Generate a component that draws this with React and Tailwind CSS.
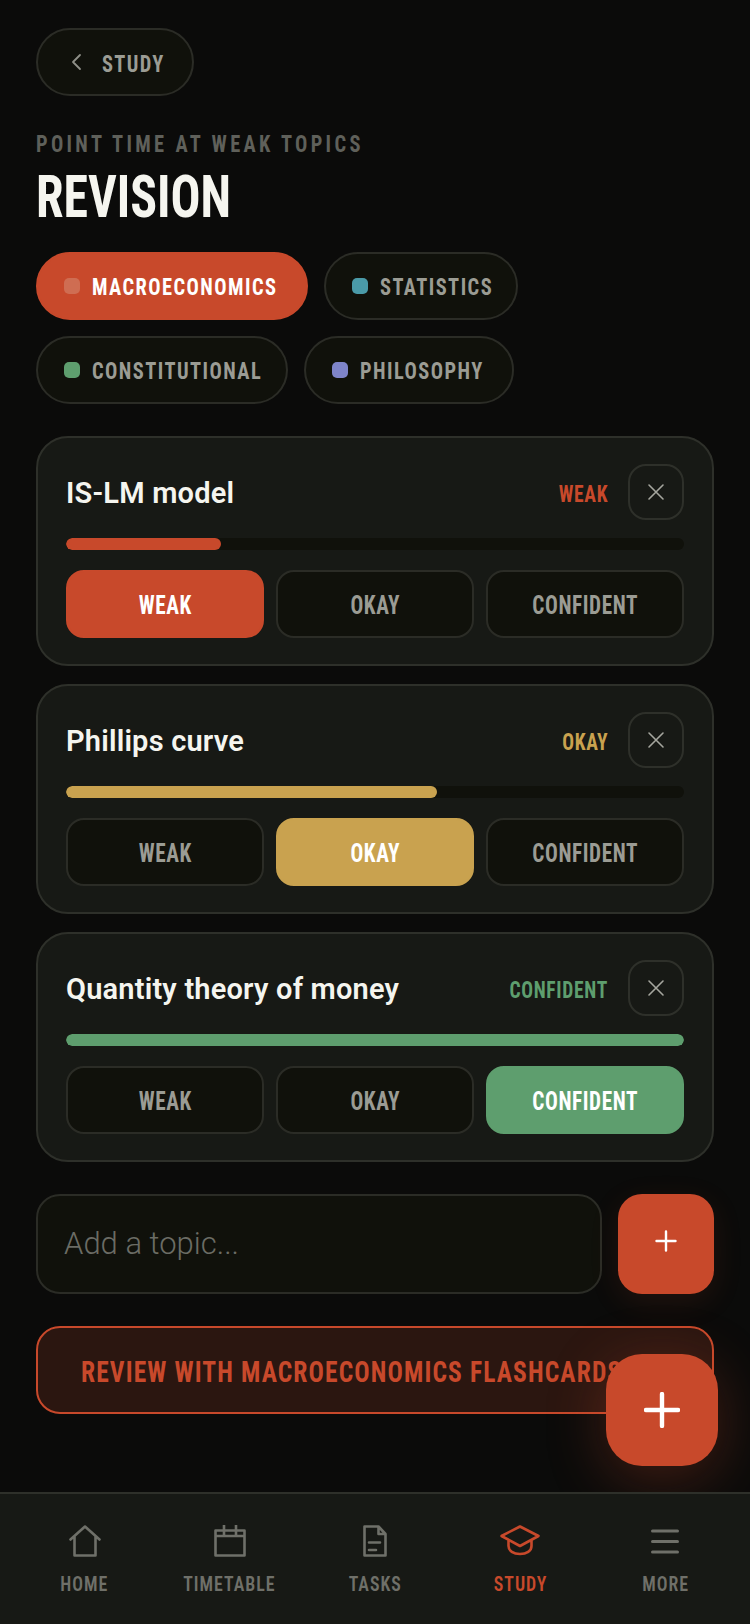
function Chip({ label, dot, active, w }) {
  return (
    <div className={`h-[68px] flex items-center gap-3 pl-[26px] rounded-full border-2 ${w} ${active ? "bg-[#c8492b] border-[#c8492b] text-white" : "bg-[#10110b] border-[#2b2c26] text-[#9b9c94]"}`}>
      <span className={`w-4 h-4 shrink-0 rounded-[5px] ${dot}`}></span>
      <span className="pt-[2px] origin-left scale-x-[0.85] font-['Roboto',sans-serif] font-stretch-[75%] font-bold text-[24px] tracking-[1.7px] leading-none whitespace-nowrap">{label}</span>
    </div>
  );
}

function Level({ label, active }) {
  return (
    <div className={`flex-1 h-[68px] flex items-center justify-center rounded-[18px] border-2 ${active || "bg-[#10110b] border-[#2b2c26] text-[#9b9c94]"}`}>
      <span className="pt-[4px] scale-x-[0.85] font-['Roboto',sans-serif] font-stretch-[75%] font-bold text-[25px] tracking-[0.7px]">{label}</span>
    </div>
  );
}

function Topic({ title, level, color, width, fill, activeCls }) {
  const levels = ["WEAK", "OKAY", "CONFIDENT"];
  return (
    <div className="h-[230px] rounded-[32px] border-2 border-[#2e302a] bg-[#171915] pt-[26px] px-7">
      <div className="flex items-center h-[56px]">
        <div className="flex-1 pt-[3px] font-['Roboto',sans-serif] font-semibold text-[29px] tracking-[0.2px] text-[#f5f5ef]">{title}</div>
        <div className={`pt-[6px] mr-5 origin-right scale-x-[0.85] font-['Roboto',sans-serif] font-stretch-[75%] font-bold text-[23px] tracking-[0.8px] ${color}`}>{level}</div>
        <div className="w-14 h-14 rounded-[18px] border-2 border-[#2e302a] flex items-center justify-center">
          <svg width="18" height="18" viewBox="0 0 18 18" fill="none" stroke="#a5a69e" strokeWidth="1.6" strokeLinecap="round"><path d="M2 2l14 14M16 2L2 16" /></svg>
        </div>
      </div>
      <div className="h-3 rounded-full bg-[#10110b] mt-[18px] overflow-hidden">
        <div className={`h-full rounded-full ${fill}`} style={{ width }}></div>
      </div>
      <div className="flex gap-3 mt-5">
        {levels.map((l) => <Level key={l} label={l} active={l === level ? activeCls : ""} />)}
      </div>
    </div>
  );
}

function NavItem({ label, active, children }) {
  return (
    <div className={`flex-1 flex flex-col items-center ${active ? "text-[#c8492b]" : "text-[#6f7069]"}`}>
      <div className="h-[34px] flex items-center justify-center">{children}</div>
      <div className="mt-[14px] scale-x-[0.85] font-['Roboto',sans-serif] font-stretch-[75%] font-semibold text-[21px] leading-[25px] tracking-[1.2px]">{label}</div>
    </div>
  );
}

export default function App() {
  return (
    <div className="relative w-[750px] h-[1624px] bg-[#0b0b0a] overflow-hidden">
      <div className="px-9 pt-7">
        <div className="w-[158px] h-[68px] rounded-full border-2 border-[#2b2c26] bg-[#10110b] flex items-center pl-[32px] gap-[18px]">
          <svg width="14" height="20" viewBox="0 0 14 20" fill="none" stroke="#8f9088" strokeWidth="1.8" strokeLinecap="round" strokeLinejoin="round"><path d="M10 3L3 10l7 7" /></svg>
          <span className="pt-[3px] origin-left scale-x-[0.85] font-['Roboto',sans-serif] font-stretch-[75%] font-bold text-[24px] tracking-[1.6px] text-[#9b9c94]">STUDY</span>
        </div>
        <div className="mt-[34px] origin-left scale-x-[0.85] whitespace-nowrap font-['Roboto',sans-serif] font-stretch-[75%] font-bold text-[24px] tracking-[3.9px] leading-[28px] text-[#5f605a]">POINT TIME AT WEAK TOPICS</div>
        <div className="mt-[5px] origin-left scale-x-[0.83] font-['Roboto',sans-serif] font-stretch-[75%] font-bold text-[60px] leading-[68px] text-[#f5f5ef]">REVISION</div>
        <div className="mt-[21px] flex flex-wrap gap-4">
          <Chip label="MACROECONOMICS" dot="bg-[#cf6d52]" w="w-[272px]" active />
          <Chip label="STATISTICS" dot="bg-[#4a9aa8]" w="w-[194px]" />
          <Chip label="CONSTITUTIONAL" dot="bg-[#5e9e6e]" w="w-[252px]" />
          <Chip label="PHILOSOPHY" dot="bg-[#7e84c9]" w="w-[210px]" />
        </div>
        <div className="mt-8 flex flex-col gap-[18px]">
          <Topic title="IS-LM model" level="WEAK" color="text-[#c8492b]" width="25%" fill="bg-[#c8492b]" activeCls="bg-[#c8492b] border-[#c8492b] text-white" />
          <Topic title="Phillips curve" level="OKAY" color="text-[#c9a24f]" width="60%" fill="bg-[#c9a24f]" activeCls="bg-[#c9a24f] border-[#c9a24f] text-white" />
          <Topic title="Quantity theory of money" level="CONFIDENT" color="text-[#5e9e6e]" width="100%" fill="bg-[#5e9e6e]" activeCls="bg-[#5e9e6e] border-[#5e9e6e] text-white" />
        </div>
        <div className="mt-8 flex gap-4">
          <div className="flex-1 h-[100px] rounded-[24px] border-2 border-[#2b2c26] bg-[#10110b] flex items-center pl-[26px] font-['Roboto',sans-serif] font-light text-[31px] text-[#6b6c65]">Add a topic...</div>
          <div className="w-24 h-[100px] pb-[6px] rounded-[24px] bg-[#c8492b] flex items-center justify-center shadow-[0_8px_30px_rgba(200,73,43,0.12)]">
            <svg width="22" height="22" viewBox="0 0 22 22" stroke="#fff" strokeWidth="2.4" strokeLinecap="round"><path d="M11 1.5v19M1.5 11h19" /></svg>
          </div>
        </div>
        <div className="mt-8 h-[88px] rounded-[24px] border-2 border-[#c8492b] bg-[#2b1610] flex items-center pl-[43px]">
          <span className="pt-[3px] origin-left scale-x-[0.85] font-['Roboto',sans-serif] font-stretch-[75%] font-bold text-[30px] tracking-[1.3px] text-[#c8492b] whitespace-nowrap">REVIEW WITH MACROECONOMICS FLASHCARDS</span>
        </div>
      </div>

      <div className="absolute left-[606px] top-[1354px] w-28 h-28 rounded-[36px] bg-[#c8492b] flex items-center justify-center shadow-[0_12px_60px_rgba(200,73,43,0.3)]">
        <svg width="36" height="36" viewBox="0 0 36 36" stroke="#fff" strokeWidth="4.4" strokeLinecap="round"><path d="M18 2v32M2 18h32" /></svg>
      </div>

      <div className="absolute left-0 right-0 bottom-0 h-[132px] bg-[#171915] border-t-2 border-[#2e302a] flex px-[12px] pt-[30px]">
        <NavItem label="HOME">
          <svg width="32" height="32" viewBox="0 0 32 32" fill="none" stroke="currentColor" strokeWidth="2.6" strokeLinejoin="round" strokeLinecap="round"><path d="M1.5 14.5L16 1.5l14.5 13M5.5 11.5V30.5h21V11.5" /></svg>
        </NavItem>
        <NavItem label="TIMETABLE">
          <svg width="32" height="32" viewBox="0 0 32 32" fill="none" stroke="currentColor" strokeWidth="2.6" strokeLinejoin="round"><path d="M1.5 5.5h29v25h-29zM1.5 11h29M10 0v11M22 0v11" /></svg>
        </NavItem>
        <NavItem label="TASKS">
          <svg width="24" height="32" viewBox="0 0 24 32" fill="none" stroke="currentColor" strokeWidth="2.6" strokeLinejoin="round" strokeLinecap="round"><path d="M1.5 1.5h14l7 7.5v21.5h-21zM15.5 1.5V9h7M6 17.5h11M6 25h7" /></svg>
        </NavItem>
        <NavItem label="STUDY" active>
          <svg width="40" height="32" viewBox="0 0 40 32" fill="none" stroke="currentColor" strokeWidth="2.6" strokeLinejoin="round"><path d="M20 1.5l18.5 9.5L20 21 1.5 11zM8.5 15v6c0 5 5 8 11.5 8s11.5-3 11.5-8v-6" /></svg>
        </NavItem>
        <NavItem label="MORE">
          <svg width="28" height="26" viewBox="0 0 28 26" stroke="currentColor" strokeWidth="3" strokeLinecap="round"><path d="M1.5 3h25M1.5 13.5h25M1.5 24h25" /></svg>
        </NavItem>
      </div>
    </div>
  );
}
